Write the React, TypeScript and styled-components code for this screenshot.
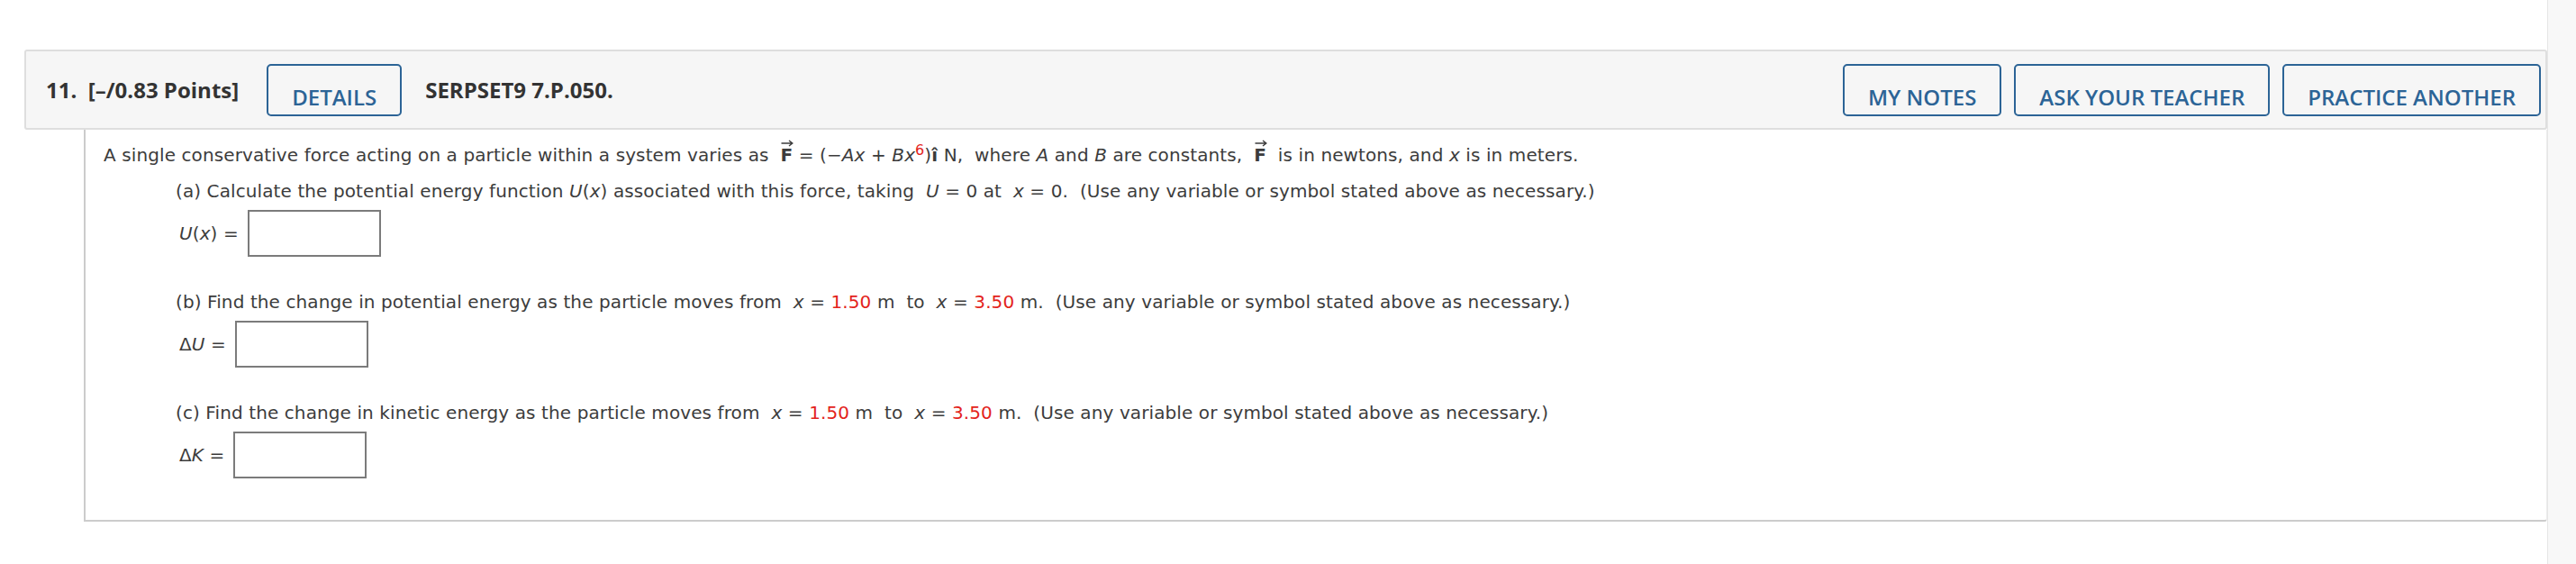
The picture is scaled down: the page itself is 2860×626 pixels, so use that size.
import React from 'react';
import styled, { createGlobalStyle } from 'styled-components';

const GlobalStyle = createGlobalStyle`
  html, body {
    margin: 0;
    padding: 0;
    background: #ffffff;
  }
`;

const Page = styled.div`
  display: flex;
  height: 626px;
  overflow: hidden;
`;

const Main = styled.div`
  flex: 1;
  padding: 55px 0 0 27px;
`;

const ScrollTrack = styled.div`
  width: 31px;
  border-left: 1px solid #e6e6e6;
  background: #f8f8f8;
`;

const Header = styled.div`
  display: flex;
  align-items: center;
  box-sizing: border-box;
  height: 89px;
  padding: 0 5px 0 22px;
  background: #f6f6f6;
  border: 2px solid #dedede;
  border-radius: 3px;
`;

const Title = styled.span<{ $gap?: number }>`
  font-family: 'Open Sans', 'Liberation Sans', sans-serif;
  font-weight: 700;
  font-size: 24px;
  color: #333333;
  white-space: pre;
  margin-right: ${(p) => p.$gap ?? 0}px;
`;

const Button = styled.button<{ $gap?: number }>`
  display: flex;
  align-items: center;
  box-sizing: border-box;
  height: 58px;
  padding: 16px 26px 0;
  background: transparent;
  border: 2px solid #2c6496;
  border-radius: 5px;
  color: #2c6496;
  font-family: 'Open Sans', 'Liberation Sans', sans-serif;
  font-weight: 600;
  font-size: 24px;
  white-space: nowrap;
  cursor: pointer;
  margin-right: ${(p) => p.$gap ?? 0}px;
`;

const Actions = styled.div`
  display: flex;
  gap: 14px;
  margin-left: auto;
`;

const Body = styled.div`
  margin-left: 66px;
  padding: 14px 20px 46px;
  border-left: 2px solid #cccccc;
  border-bottom: 2px solid #cccccc;
  border-right: 1px solid #ececec;
  border-bottom-right-radius: 3px;
  font-family: 'DejaVu Sans', Verdana, sans-serif;
  font-size: 20px;
  letter-spacing: 0.1px;
  color: #3c3c3c;
`;

const Line = styled.div`
  height: 28px;
  line-height: 28px;
  white-space: pre;
`;

const Part = styled.div<{ $first?: boolean }>`
  margin: ${(p) => (p.$first ? '12px' : '36px')} 0 0 80px;
`;

const AnswerRow = styled.div`
  display: flex;
  align-items: center;
  gap: 10px;
  margin-top: 7px;
  padding-left: 4px;
`;

const AnswerBox = styled.input`
  box-sizing: border-box;
  width: 148px;
  height: 52px;
  border: 2px solid #7b7b7b;
  border-radius: 0;
  background: #ffffff;
  padding: 0 6px;
`;

const V = styled.i`
  font-style: italic;
`;

const Red = styled.span`
  color: #e3231b;
`;

const Sup = styled.sup`
  color: #e3231b;
  font-size: 16px;
  line-height: 0;
  vertical-align: 7px;
`;

const VecWrap = styled.b`
  position: relative;
  display: inline-block;
  font-weight: 700;
`;

const VecArrow = styled.svg`
  position: absolute;
  left: 1px;
  top: -3px;
  width: 14px;
  height: 8px;
`;

const Vec = ({ letter }: { letter: string }) => (
  <VecWrap>
    {letter}
    <VecArrow viewBox="0 0 14 8">
      <path d="M0.5 4 H12.5 M9 1 L12.8 4 L9 7" fill="none" stroke="#3c3c3c" strokeWidth="1.4" />
    </VecArrow>
  </VecWrap>
);

const RangeText = () => (
  <>
    {'  '}
    <V>x</V> = <Red>1.50</Red> m  to  <V>x</V> = <Red>3.50</Red> m.  (Use any variable or symbol stated above as
    necessary.)
  </>
);

export default function App() {
  return (
    <>
      <GlobalStyle />
      <Page>
        <Main>
          <Header>
            <Title $gap={31}>11.  [–/0.83 Points]</Title>
            <Button $gap={26}>DETAILS</Button>
            <Title>SERPSET9 7.P.050.</Title>
            <Actions>
              <Button>MY NOTES</Button>
              <Button>ASK YOUR TEACHER</Button>
              <Button>PRACTICE ANOTHER</Button>
            </Actions>
          </Header>
          <Body>
            <Line>
              A single conservative force acting on a particle within a system varies as  <Vec letter="F" /> = (−
              <V>A</V>
              <V>x</V> + <V>B</V>
              <V>x</V>
              <Sup>6</Sup>)<b>î</b> N,  where <V>A</V> and <V>B</V> are constants,  <Vec letter="F" />  is in newtons,
              and <V>x</V> is in meters.
            </Line>
            <Part $first>
              <Line>
                (a) Calculate the potential energy function <V>U</V>(<V>x</V>) associated with this force, taking  <V>U</V> = 0
                at  <V>x</V> = 0.  (Use any variable or symbol stated above as necessary.)
              </Line>
              <AnswerRow>
                <span>
                  <V>U</V>(<V>x</V>) =
                </span>
                <AnswerBox type="text" />
              </AnswerRow>
            </Part>
            <Part>
              <Line>
                (b) Find the change in potential energy as the particle moves from
                <RangeText />
              </Line>
              <AnswerRow>
                <span>
                  Δ<V>U</V> =
                </span>
                <AnswerBox type="text" />
              </AnswerRow>
            </Part>
            <Part>
              <Line>
                (c) Find the change in kinetic energy as the particle moves from
                <RangeText />
              </Line>
              <AnswerRow>
                <span>
                  Δ<V>K</V> =
                </span>
                <AnswerBox type="text" />
              </AnswerRow>
            </Part>
          </Body>
        </Main>
        <ScrollTrack />
      </Page>
    </>
  );
}
